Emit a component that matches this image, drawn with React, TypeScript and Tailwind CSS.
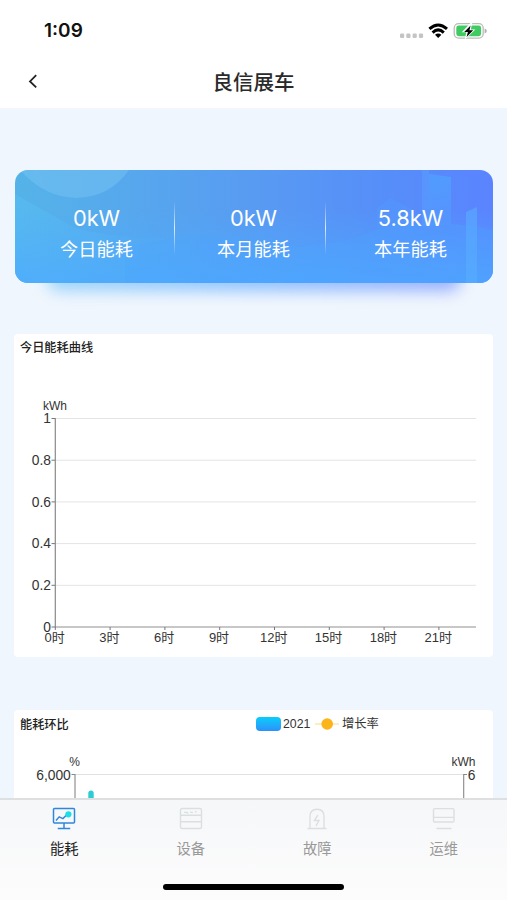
import type { ReactNode } from 'react';

const summary = [
  { value: '0kW', label: '今日能耗' },
  { value: '0kW', label: '本月能耗' },
  { value: '5.8kW', label: '本年能耗' },
];

const yLabels = ['1', '0.8', '0.6', '0.4', '0.2', '0'];
const xLabels = ['0时', '3时', '6时', '9时', '12时', '15时', '18时', '21时'];

const StatusBar = () => (
  <div className="flex h-[54px] shrink-0 items-start justify-between pl-[44px] pr-5 pt-[19px]">
    <span className="font-['Inter','Liberation_Sans',sans-serif] text-[19px] font-semibold leading-6 text-[#111]">1:09</span>
    <svg className="mt-[2px]" width="88" height="20" viewBox="399 21 88 20">
      {[400, 406.3, 412.6, 418.9].map((x) => (
        <rect key={x} x={x} y="33.6" width="4.2" height="4.4" rx="1.2" fill="#c4c4c4" />
      ))}
      {/* Wi-Fi */}
      <g fill="none" stroke="#000" strokeWidth="2.9">
        <path d="M429.4 28.9 Q438.2 20.9 447 28.9" />
        <path d="M432.6 32.6 Q438.2 27.2 443.8 32.6" />
      </g>
      <path d="M435 34.7 Q438.2 32.1 441.4 34.7 L438.2 37.9 Z" />
      {/* Battery */}
      <rect x="454.2" y="23.6" width="29" height="14.6" rx="4.4" fill="#fff" stroke="#b9bcb9" strokeWidth="1.3" />
      <rect x="456.3" y="25.6" width="24.8" height="10.6" rx="2.4" fill="#3fcb62" />
      <path d="M484.6 28.6 Q486.8 29.4 486.8 31 Q486.8 32.6 484.6 33.4 Z" fill="#b0b0b0" />
      <path d="M471 22.6 L461.8 32.2 H466.2 L464.8 39.4 L475.4 29.4 H470.8 L472.4 22.6 Z" fill="#fff" />
      <path d="M470.6 25.4 L464.2 31.9 H467.9 L466.6 37 L473.2 30.2 H469.5 Z" fill="#000" />
    </svg>
  </div>
);

const Header = () => (
  <div className="grid h-[54px] shrink-0 grid-cols-[1fr_auto_1fr] items-center">
    <svg className="ml-7" width="12" height="16" viewBox="0 0 12 16" fill="none" stroke="#222" strokeWidth="1.8">
      <path d="M8.2 2.2 L2 8.4 L8.2 14.4" />
    </svg>
    <h1 className="text-[20.5px] font-medium leading-7 text-[#2a2a2a]">良信展车</h1>
  </div>
);

const SummaryArt = () => (
  <svg className="absolute inset-0" width="478" height="113" viewBox="0 0 478 113">
    <defs>
      <linearGradient id="base" x1="0" y1="0" x2="1" y2="0">
        <stop offset="0" stopColor="#55b3e8" />
        <stop offset="0.5" stopColor="#589bf2" />
        <stop offset="0.78" stopColor="#568ef9" />
        <stop offset="1" stopColor="#5a84ff" />
      </linearGradient>
      <linearGradient id="floor" x1="0" y1="0" x2="0" y2="1">
        <stop offset="0.35" stopColor="#4daaff" stopOpacity="0" />
        <stop offset="1" stopColor="#4daaff" stopOpacity="0.75" />
      </linearGradient>
      <linearGradient id="tower" x1="0" y1="0" x2="0" y2="1">
        <stop offset="0" stopColor="#50a0ff" stopOpacity="0.8" />
        <stop offset="1" stopColor="#50a5ff" stopOpacity="0.3" />
      </linearGradient>
      <linearGradient id="glow" x1="0" y1="0.5" x2="1" y2="0.4">
        <stop offset="0" stopColor="#57bef5" stopOpacity="0.9" />
        <stop offset="1" stopColor="#57bef5" stopOpacity="0" />
      </linearGradient>
    </defs>
    <rect width="478" height="113" fill="url(#base)" />
    <path d="M0 24 L60 58 Q110 72 180 66 V113 H0 Z" fill="url(#glow)" opacity="0.6" />
    <rect width="478" height="113" fill="url(#floor)" />
    <path d="M5 0 Q29 27 61 28 Q95 27 114 0 Z" fill="#79c6f3" opacity="0.45" />
    <path d="M110 113 V78 Q190 55 280 77 Q340 73 367 57 Q430 48 478 60 V113 Z" fill="#4da7ff" opacity="0.3" />
    <path d="M414 4 L436 7 V54 L414 56 Z" fill="url(#tower)" />
    <path d="M407 0 H414 V56 H407 Z" fill="#58a2ff" opacity="0.45" />
    <path d="M362 38 L375 28 L397 39 V72 H362 Z" fill="#529cff" opacity="0.4" />
    <path d="M451 42 L462 37 V113 H451 Z" fill="#58aeff" opacity="0.6" />
    <path d="M335 113 V86 L352 80 H442 V113 Z" fill="#579eff" opacity="0.2" />
  </svg>
);

const Summary = () => (
  <div className="relative mx-[14.5px] h-[113px] shrink-0">
    {/* Coloured glow under the card */}
    <div className="absolute inset-x-8 -bottom-[8px] h-6 rounded-full bg-linear-to-r from-[#66bef7] via-[#4b9eff] to-[#5a7dff] opacity-60 blur-[8px]" />
    <div className="relative h-full overflow-hidden rounded-[13px]">
      <SummaryArt />
      <div className="relative grid h-full grid-cols-[157px_157px_157px] justify-start pl-[3.5px]">
        {summary.map((item) => (
          <div key={item.label} className="flex flex-col items-center pt-[34px] text-white">
            <span className="font-['Inter','Liberation_Sans',sans-serif] text-[21.8px] leading-[28px]">{item.value}</span>
            <span className="mt-[2px] text-[18.2px] leading-[28px]">{item.label}</span>
          </div>
        ))}
      </div>
      <div className="absolute left-[159px] top-[31px] h-[54px] w-px bg-linear-to-b from-white/0 via-white/80 to-white/0" />
      <div className="absolute left-[310px] top-[31px] h-[54px] w-px bg-linear-to-b from-white/0 via-white/80 to-white/0" />
    </div>
  </div>
);

const TodayChart = () => (
  <svg width="480" height="295" viewBox="14 362 480 295" className="block font-['Liberation_Sans','Noto_Sans_CJK_SC',sans-serif]">
    <text x="55" y="409.5" textAnchor="middle" fontSize="12" fill="#333">kWh</text>
    {yLabels.map((label, i) => (
      <g key={label}>
        <path d={`M55 ${418.5 + i * 41.7} H476`} stroke={i === 5 ? '#909090' : '#e2e4e6'} strokeWidth={i === 5 ? 1.2 : 1} />
        <path d={`M51.5 ${418.5 + i * 41.7} H55`} stroke="#777" />
        <text x="51" y={423.3 + i * 41.7} textAnchor="end" fontSize="13.8" fill="#333">{label}</text>
      </g>
    ))}
    <path d="M55.3 418 V627.5" stroke="#888" strokeWidth="1.2" />
    {xLabels.map((label, i) => (
      <g key={label}>
        <path d={`M${55.3 + i * 54.8} 627 V630`} stroke="#777" />
        <text x={54.6 + i * 54.8} y="642.4" textAnchor="middle" fontSize="13" fill="#333">{label}</text>
      </g>
    ))}
  </svg>
);

const RatioChart = () => (
  <svg width="480" height="60" viewBox="14 738 480 60" className="block font-['Liberation_Sans',sans-serif]" fill="#333">
    <text x="74.7" y="765.6" textAnchor="middle" fontSize="12">%</text>
    <text x="463.5" y="765.6" textAnchor="middle" fontSize="12">kWh</text>
    <text x="70.8" y="779.6" textAnchor="end" fontSize="13.8">6,000</text>
    <text x="467.8" y="779.6" fontSize="13.8">6</text>
    <path d="M75 774.5 H464" stroke="#dfe1e3" />
    <path d="M71.5 774.5 H75 V798 M467 774.5 H463.7 V798" fill="none" stroke="#888" strokeWidth="1.1" />
    <path d="M88.3 798 V793 Q88.3 790.4 91 790.4 Q93.7 790.4 93.7 793 V798 Z" fill="#2bccd3" />
  </svg>
);

const Legend = () => (
  <div className="flex items-center font-['Liberation_Sans','Noto_Sans_CJK_SC',sans-serif] text-[12.3px] leading-4 text-[#333]">
    <span className="h-[14px] w-[25px] rounded-[4px] bg-linear-to-b from-[#04cdfa] to-[#2b90fb]" />
    <span className="ml-[2px] w-[27px]">2021</span>
    <svg className="ml-[5px]" width="24" height="14" viewBox="0 0 24 14">
      <path d="M0 7 H24" stroke="#fde6a4" strokeWidth="1.4" />
      <circle cx="12.2" cy="7" r="5.8" fill="#fbb51b" />
    </svg>
    <span className="ml-[3px]">增长率</span>
  </div>
);

const tabs: { label: string; active?: boolean; icon: ReactNode }[] = [
  {
    label: '能耗',
    active: true,
    icon: (
      <>
        <g stroke="#2f86dd" strokeWidth="1.5">
          <rect x="1.5" y="1.4" width="21" height="14.6" rx="1" />
          <path d="M4 13.4 L7.2 9.8 L10.9 11.6 L14.6 8 M12 16 V21.4 M5.8 21.5 H18.2" />
        </g>
        <circle cx="16.4" cy="7.3" r="3.1" fill="#19dfe9" stroke="none" />
      </>
    ),
  },
  {
    label: '设备',
    icon: (
      <>
        <rect x="1.5" y="1.5" width="21" height="20" rx="1.6" />
        <path d="M1.5 8.2 H22.5 M1.5 14.8 H22.5 M5 5.4 H8 L9 6.4 M11 5.4 H14 M16 4.8 H17.5" />
      </>
    ),
  },
  {
    label: '故障',
    icon: (
      <path d="M2.5 21.5 H21.5 M5 21.5 V9.5 C5 4.5 8 2.2 12 2.2 C16 2.2 19 4.5 19 9.5 V21.5 M12.8 8.2 L9.4 13.5 H14 L11 18.8" />
    ),
  },
  {
    label: '运维',
    icon: (
      <>
        <rect x="1.5" y="1.6" width="20.5" height="13.4" rx="1.2" />
        <path d="M1.5 10.4 H22 M4.5 21.5 H19.5" />
      </>
    ),
  },
];

const TabBar = () => (
  <nav className="flex h-[102px] shrink-0 flex-col items-center border-t-2 border-[#dedfe0] bg-linear-to-b from-[#f6f7f8] to-[#fcfcfd]">
    <div className="grid w-full grid-cols-4 pl-[1px] pt-[7px]">
      {tabs.map((tab) => (
        <div key={tab.label} className="flex flex-col items-center">
          <svg width="24" height="24" viewBox="0 0 24 24" fill="none" stroke="#dcdfe2" strokeWidth="1.4">
            {tab.icon}
          </svg>
          <span className={`mt-[7px] text-[14.3px] leading-5 ${tab.active ? 'text-[#222]' : 'text-[#999]'}`}>{tab.label}</span>
        </div>
      ))}
    </div>
    <div className="mt-[26px] h-[6px] w-[181px] rounded-full bg-black" />
  </nav>
);

const App = () => {
  return (
    <div className="flex h-[900px] w-[507px] flex-col overflow-hidden bg-[#f0f6fd] font-['Noto_Sans_CJK_SC',sans-serif]">
      <div className="shrink-0 bg-white">
        <StatusBar />
        <Header />
      </div>

      <main className="flex min-h-0 flex-1 flex-col overflow-hidden pt-[62px]">
        <Summary />

        <section className="mx-[14px] mt-[51px] h-[323px] shrink-0 rounded-[4px] bg-white">
          <h2 className="h-7 pl-[6px] pt-[3px] text-[12.2px] font-medium leading-5 text-[#222]">今日能耗曲线</h2>
          <TodayChart />
        </section>

        <section className="mx-[14px] mt-[53px] shrink-0 rounded-t-[4px] bg-white">
          <div className="flex h-7 items-center">
            <h2 className="w-[242px] pl-[6px] text-[12.2px] font-medium leading-5 text-[#222]">能耗环比</h2>
            <Legend />
          </div>
          <RatioChart />
        </section>
      </main>

      <TabBar />
    </div>
  );
};

export default App;
